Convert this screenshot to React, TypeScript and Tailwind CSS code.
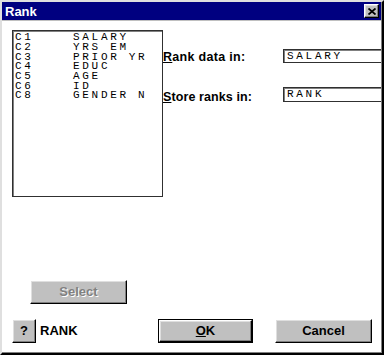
const variables = [
  ["C1", "SALARY"],
  ["C2", "YRS EM"],
  ["C3", "PRIOR YR"],
  ["C4", "EDUC"],
  ["C5", "AGE"],
  ["C6", "ID"],
  ["C8", "GENDER N"],
];

// classic raised 3d button edges
const raised =
  "border border-t-white border-l-white border-r-black border-b-black bg-[#c0c0c0] shadow-[inset_-1px_-1px_0_#808080,inset_1px_1px_0_#dfdfdf]";

const mono = "font-['Liberation_Mono','DejaVu_Sans_Mono',monospace] text-[11px] tracking-[2.7px]";

export default function App() {
  return (
    <div className="h-[355px] w-[384px] overflow-hidden border-2 border-l-[#dfdfdf] border-t-[#dfdfdf] border-r-black border-b-black bg-[#c0c0c0] font-['Liberation_Sans',Arial,sans-serif]">
      <div className="flex h-full flex-col border-r border-b border-r-[#808080] border-b-[#808080]">
        {/* Title bar */}
        <div className="flex h-[18px] shrink-0 items-center justify-between bg-[#000080] pl-[3px] pr-[2px]">
          <span className="text-[13px] leading-none font-bold text-white">Rank</span>
          <button className={`flex h-[14px] w-[15px] items-center justify-center ${raised}`}>
            <svg width="8" height="7" viewBox="0 0 8 7">
              <path d="M0.5 0.5 L7.5 6.5 M7.5 0.5 L0.5 6.5" stroke="black" strokeWidth="1.8" />
            </svg>
          </button>
        </div>

        {/* Body */}
        <div className="mt-px flex flex-1 flex-col overflow-hidden bg-white pt-[9px] pl-[10px]">
          <div className="flex">
            {/* Variable list */}
            <div className="h-[167px] w-[151px] shrink-0 border border-[#303030] bg-white pt-[2px] pl-[2px] shadow-[inset_1px_1px_0_#808080]">
              {variables.map(([col, name]) => (
                <div key={col} className={`flex h-[9.67px] items-center leading-none ${mono}`}>
                  <span className="w-[58px]">{col}</span>
                  <span className="whitespace-pre">{name}</span>
                </div>
              ))}
            </div>

            {/* Fields */}
            <div className="flex flex-col">
              <div className="mt-[19px] flex h-[14px] items-center">
                <span className="w-[120px] pt-[2px] text-[12.5px] font-bold tracking-[0.3px]">
                  <span className="underline">R</span>ank data in:
                </span>
                <div className={`h-[14px] w-[110px] border border-[#303030] pl-[3px] leading-[12px] shadow-[inset_1px_1px_0_#808080] ${mono}`}>
                  SALARY
                </div>
              </div>
              <div className="mt-[24px] flex h-[15px] items-center">
                <span className="w-[120px] pt-[6px] text-[12.5px] font-bold tracking-[0.1px]">
                  <span className="underline">S</span>tore ranks in:
                </span>
                <div className={`h-[15px] w-[110px] border border-[#303030] pl-[3px] leading-[12px] shadow-[inset_1px_1px_0_#808080] ${mono}`}>
                  RANK
                </div>
              </div>
            </div>
          </div>

          {/* Select */}
          <button
            disabled
            className={`mt-[83px] ml-[18px] h-[24px] w-[97px] text-[13px] font-bold text-[#808080] [text-shadow:1px_1px_0_#fff] ${raised}`}
          >
            Select
          </button>

          {/* Bottom row */}
          <div className="mt-[15px] flex items-center">
            <button className={`h-[24px] w-[24px] text-[13px] font-bold ${raised}`}>?</button>
            <span className="ml-[4px] w-[118px] text-[13px] font-bold">RANK</span>
            <div className="border border-black">
              <button className={`block h-[22px] w-[93px] text-[13px] font-bold ${raised}`}>
                <span className="underline">O</span>K
              </button>
            </div>
            <button className={`ml-[22px] h-[24px] w-[97px] text-[13px] font-bold ${raised}`}>Cancel</button>
          </div>
        </div>
      </div>
    </div>
  );
}
